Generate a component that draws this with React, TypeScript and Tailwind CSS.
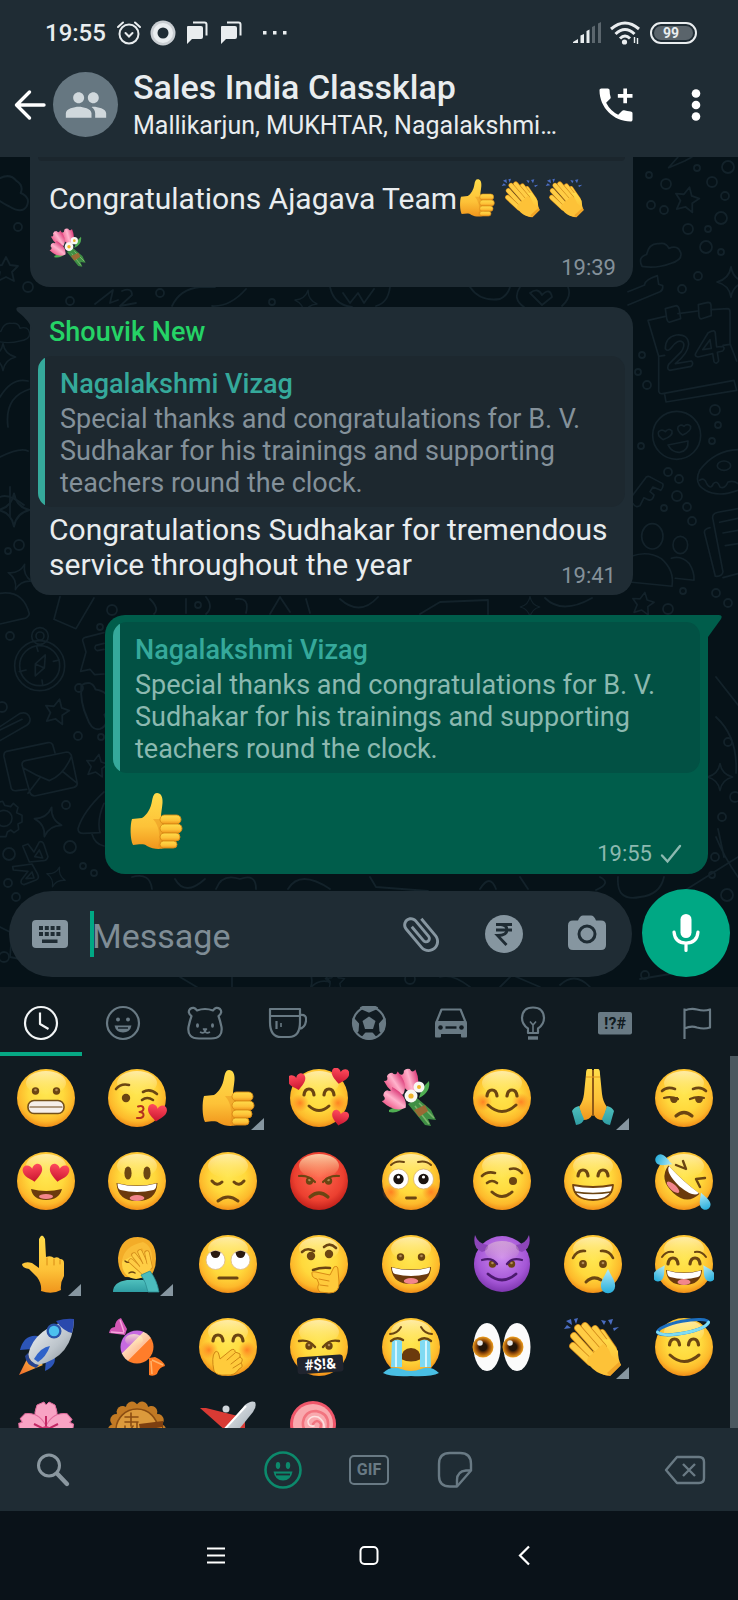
import React from "react";
import { MdAddIcCall, MdAttachFile, MdGroup } from "react-icons/md";

type Kids = { children?: React.ReactNode };

const BROWN = "#6b4512";

/* ---------- shared gradients for the emoji drawings ---------- */

function Gradients() {
  return (
    <svg className="absolute h-0 w-0" aria-hidden="true">
      <defs>
        <radialGradient id="gFace" cx=".5" cy=".42" r=".6">
          <stop offset="0" stopColor="#ffe650" />
          <stop offset=".5" stopColor="#ffd93c" />
          <stop offset=".8" stopColor="#fdb92b" />
          <stop offset="1" stopColor="#ee8514" />
        </radialGradient>
        <linearGradient id="gShine" x1="0" y1="0" x2="0" y2="1">
          <stop offset="0" stopColor="#fff7cc" stopOpacity=".75" />
          <stop offset="1" stopColor="#fff2a0" stopOpacity="0" />
        </linearGradient>
        <radialGradient id="gRed" cx=".5" cy=".42" r=".6">
          <stop offset="0" stopColor="#ff6a50" />
          <stop offset=".7" stopColor="#ec4030" />
          <stop offset="1" stopColor="#bd1c18" />
        </radialGradient>
        <radialGradient id="gPurple" cx=".5" cy=".38" r=".64">
          <stop offset="0" stopColor="#cf8cf0" />
          <stop offset=".7" stopColor="#a456d6" />
          <stop offset="1" stopColor="#7a33ab" />
        </radialGradient>
        <radialGradient id="gCheek">
          <stop offset="0" stopColor="#ff6a1c" stopOpacity=".75" />
          <stop offset="1" stopColor="#ff7a1c" stopOpacity="0" />
        </radialGradient>
        <linearGradient id="gHand" x1="0" y1="0" x2="0" y2="1">
          <stop offset="0" stopColor="#ffdc4a" />
          <stop offset=".6" stopColor="#fdc238" />
          <stop offset="1" stopColor="#f0951c" />
        </linearGradient>
        <linearGradient id="gHeart" x1="0" y1="0" x2="0" y2="1">
          <stop offset="0" stopColor="#ff4a5c" />
          <stop offset="1" stopColor="#c9152f" />
        </linearGradient>
        <linearGradient id="gTear" x1="0" y1="0" x2="0" y2="1">
          <stop offset="0" stopColor="#b6ecf9" />
          <stop offset="1" stopColor="#27aedb" />
        </linearGradient>
        <linearGradient id="gTulip" x1="0" y1="0" x2="1" y2="0">
          <stop offset="0" stopColor="#f0608f" />
          <stop offset=".5" stopColor="#ffb3cc" />
          <stop offset="1" stopColor="#dd3f7c" />
        </linearGradient>
        <linearGradient id="gSteel" x1="0" y1="0" x2="1" y2="1">
          <stop offset="0" stopColor="#f6f8fa" />
          <stop offset=".6" stopColor="#bcc4cb" />
          <stop offset="1" stopColor="#7d8790" />
        </linearGradient>
        <linearGradient id="gFlame" x1="1" y1="0" x2="0" y2="1">
          <stop offset="0" stopColor="#ffd24a" />
          <stop offset="1" stopColor="#f06a2a" />
        </linearGradient>
        <linearGradient id="gTeal" x1="0" y1="0" x2="0" y2="1">
          <stop offset="0" stopColor="#4fc0bd" />
          <stop offset="1" stopColor="#2f9da3" />
        </linearGradient>
        <radialGradient id="gIris">
          <stop offset=".35" stopColor="#241408" />
          <stop offset=".6" stopColor="#8a4408" />
          <stop offset="1" stopColor="#f0a01f" />
        </radialGradient>
        <linearGradient id="gCandy" x1="0" y1="0" x2="1" y2="1">
          <stop offset=".36" stopColor="#c66ae0" />
          <stop offset=".38" stopColor="#ffd9b8" />
          <stop offset=".56" stopColor="#ffc29a" />
          <stop offset=".58" stopColor="#ff7d2a" />
        </linearGradient>
      </defs>
    </svg>
  );
}

/* ---------- small parts ---------- */

function L({ d, w = 2.6, c = BROWN }: { d: string; w?: number; c?: string }) {
  return <path d={d} fill="none" stroke={c} strokeWidth={w} strokeLinecap="round" strokeLinejoin="round" />;
}

function Finger({ d, w = 7 }: { d: string; w?: number }) {
  return (
    <>
      <L d={d} w={w + 1.6} c="#d28a1a" />
      <L d={d} w={w} c="#ffcd45" />
    </>
  );
}

function Face({ children, fill = "url(#gFace)" }: Kids & { fill?: string }) {
  return (
    <>
      <circle r="29" fill={fill} />
      <ellipse cy="-15" rx="20" ry="12" fill="url(#gShine)" />
      {children}
    </>
  );
}

function Eyes({ x = 10.5, y = -7, r = 3.7, cx = 0 }: { x?: number; y?: number; r?: number; cx?: number }) {
  return (
    <>
      <circle cx={cx - x} cy={y} r={r} fill={BROWN} />
      <circle cx={cx + x} cy={y} r={r} fill={BROWN} />
      <circle cx={cx - x} cy={y - 1} r={r * 0.35} fill="#b08a55" />
      <circle cx={cx + x} cy={y - 1} r={r * 0.35} fill="#b08a55" />
    </>
  );
}

function HappyEyes({ y = -3, x = 10 }: { y?: number; x?: number }) {
  return (
    <g transform={`translate(0 ${y})`}>
      <L d={`M${-x - 5} 1C${-x - 4} -7 ${-x + 4} -7 ${-x + 5} 1`} w={3.2} />
      <L d={`M${x - 5} 1C${x - 4} -7 ${x + 4} -7 ${x + 5} 1`} w={3.2} />
    </g>
  );
}

function Heart({ x, y, s = 1, r = 0 }: { x: number; y: number; s?: number; r?: number }) {
  return (
    <path
      transform={`translate(${x} ${y}) rotate(${r}) scale(${s})`}
      d="M0 9C-4 5.5-10 2-10-3.5C-10-7.5-7-9-4.8-8.6C-2.400-8.200-.6-6.500 0-4.500C.6-6.500 2.400-8.200 4.800-8.600C7-9 10-7.500 10-3.500C10 2 4 5.500 0 9Z"
      fill="url(#gHeart)"
    />
  );
}

function Cheeks({ y = 5, x = 19 }: { y?: number; x?: number }) {
  return (
    <>
      <circle cx={-x} cy={y} r="9" fill="url(#gCheek)" />
      <circle cx={x} cy={y} r="9" fill="url(#gCheek)" />
    </>
  );
}

function Tear({ x, y, s = 1, r = 0 }: { x: number; y: number; s?: number; r?: number }) {
  return (
    <path
      transform={`translate(${x} ${y}) rotate(${r}) scale(${s})`}
      d="M0-12C3-5 7-1 7 5A7 7 0 0 1-7 5C-7-1-3-5 0-12Z"
      fill="url(#gTear)"
    />
  );
}

function BigMouth({ y = 3, w = 20, h = 17 }: { y?: number; w?: number; h?: number }) {
  return (
    <g transform={`translate(0 ${y})`}>
      <path d={`M${-w} 0Q0 5 ${w} 0Q${w - 1} ${h} 0 ${h}Q${-w + 1} ${h} ${-w} 0Z`} fill="#6b3a0d" />
      <path d={`M${-w + 1} .5Q0 5.500 ${w - 1} .5Q${w - 1} 6 ${w - 4} 7Q0 11 ${-w + 4} 7Q${-w + 1} 6 ${-w + 1} .5Z`} fill="#fff" />
      <ellipse cy={h - 3} rx={w * 0.36} ry="3" fill="#f2868c" />
    </g>
  );
}

const TULIP = "M-8-9Q-4-6-3-11Q0-13 3-11Q4-6 8-9Q10 7 0 12Q-10 7-8-9Z";

const FINGER = { fill: "url(#gHand)", stroke: "#d98a15", strokeWidth: 0.9 };

/* ---------- emoji drawings, centred on 0,0 in a 60 x 60 box ---------- */

const ART: Record<string, React.ReactNode> = {
  grimacing: (
    <Face>
      <Eyes />
      <rect x="-18" y="2.500" width="36" height="13" rx="6" fill="#f6efea" stroke="#74501a" strokeWidth="1.600" />
      <L d="M-16 9H16" w={1.2} />
    </Face>
  ),
  kiss: (
    <Face>
      <circle cx="-11" cy="0" r="4.200" fill={BROWN} />
      <L d="M-21-9Q-16-15-8-13" />
      <L d="M6-6Q13-10 20-4" />
      <L d="M5 2Q10-2 16 2" />
      <L d="M1 8.500Q6 7 6.500 10.500Q6.500 13.500 2.500 14Q7 14.500 6.500 17.500Q6 20.500 0 20" w={2} c="#b5321f" />
      <Heart x={20} y={15} s={0.95} r={8} />
    </Face>
  ),
  thumb: (
    <>
      <path
        d="M-24-2L-14-3C-9-6-5-13-4-20C-3-25-2-28 1-28C5-28 7-24 6.500-18C6-12 5-8 5-4L12 24C10 29-2 29-9 25C-13 22-18 24-23 24C-26 18-26 4-24-2Z"
        fill="url(#gHand)"
      />
      <path d="M-3-2Q6 8 2 26L8 27V-2Z" fill="#e58f1c" opacity=".45" />
      <rect x="4" y="-6" width="21" height="9" rx="4.500" {...FINGER} />
      <rect x="4" y="3" width="22" height="9" rx="4.500" {...FINGER} />
      <rect x="4" y="12" width="20" height="8" rx="4" {...FINGER} />
      <rect x="4" y="20" width="17" height="7" rx="3.500" {...FINGER} />
    </>
  ),
  hearts: (
    <Face>
      <Cheeks />
      <HappyEyes y={-4} />
      <L d="M-10 8Q0 17 10 8" w={3} />
      <Heart x={-22} y={-16} s={0.9} r={-12} />
      <Heart x={21} y={-22} s={0.88} r={10} />
      <Heart x={21} y={20} s={0.85} r={12} />
    </Face>
  ),
  bouquet: (
    <>
      <path d="M-3 6L14 27L20 28L17 21L25 22L20 12L6 0Z" fill="#3f8f45" />
      <path d="M4 8L18 26M8 5L23 20" stroke="#7cb46c" strokeWidth="1.500" />
      <path d="M-22 12Q-12 7-6 8Q-12 16-22 14ZM18-17Q20-6 8 0Q10-10 18-17Z" fill="#4fae52" />
      <path d="M3 12L14 7L17 13L8 19Z" fill="#9a6a35" />
      <path d={TULIP} transform="translate(-1 -17) rotate(-16) scale(1.050)" fill="url(#gTulip)" />
      <path d={TULIP} transform="translate(-15 -14) rotate(-34) scale(1.050)" fill="url(#gTulip)" />
      <path d={TULIP} transform="translate(-16 2) rotate(-54) scale(1.100)" fill="url(#gTulip)" />
      <circle cx="8" cy="-11" r="5.500" fill="#f8f8f4" />
      <circle cx="8" cy="-11" r="2" fill="#eeb52c" />
      <circle cx="0" cy="-2" r="6.500" fill="#f8f8f4" />
      <circle cx="0" cy="-2" r="2.600" fill="#eeb52c" />
    </>
  ),
  blush: (
    <Face>
      <Cheeks y={4} />
      <HappyEyes y={-3} />
      <L d="M-14 7Q0 20 14 7" w={3} />
    </Face>
  ),
  pray: (
    <>
      <path d="M-1-29H-5Q-7-29-7-24L-9-4Q-10 4-14 9L-10 22Q-3 22-1 17Z" fill="url(#gHand)" />
      <path d="M1-29H5Q7-29 7-24L9-4Q10 4 14 9L10 22Q3 22 1 17Z" fill="url(#gHand)" />
      <path d="M0-28V18" stroke="#b96f16" strokeWidth="1.500" />
      <path d="M-7-21H7" stroke="#e59a22" strokeWidth="1" />
      <path d="M-14 8Q-19 9-21 13L-17 27Q-10 26-9 21Q-12 15-14 8Z" fill="url(#gTeal)" />
      <path d="M14 8Q19 9 21 13L17 27Q10 26 9 21Q12 15 14 8Z" fill="url(#gTeal)" />
    </>
  ),
  unamused: (
    <Face>
      <L d="M-22-7Q-17-12-9-9M22-7Q17-12 9-9" />
      <L d="M-20 0Q-13-2-6 1M6 1Q13-2 20 0" w={2.2} />
      <path d="M-14-1H-6Q-6 5-10 5Q-14 5-14-1ZM11-1H19Q19 5 15 5Q11 5 11-1Z" fill={BROWN} />
      <L d="M-8 18Q0 11 8 18" w={3.2} />
    </Face>
  ),
  heartEyes: (
    <Face>
      <Heart x={-13} y={-8} s={0.98} r={-10} />
      <Heart x={13} y={-8} s={0.98} r={10} />
      <path d="M-15 8Q0 12 16 8Q13 19 0 19Q-13 19-15 8Z" fill="#6b3a0d" />
      <ellipse cy="15.500" rx="7" ry="2.600" fill="#f2868c" />
    </Face>
  ),
  smiley: (
    <Face>
      <ellipse cx="-9" cy="-8" rx="3.600" ry="6.600" fill={BROWN} />
      <ellipse cx="10" cy="-8" rx="3.600" ry="6.600" fill={BROWN} />
      <BigMouth y={2} w={20.5} h={18} />
    </Face>
  ),
  sad: (
    <Face>
      <L d="M-16 0Q-11 6-6 1M16 0Q11 6 6 1" w={3} />
      <L d="M-10 20Q0 12 10 20" w={3} />
    </Face>
  ),
  angry: (
    <Face fill="url(#gRed)">
      <Eyes x={9.5} y={0} />
      <L d="M-20-5Q-10-6-4 1M20-5Q10-6 4 1" w={2.2} />
      <L d="M-9 16Q0 8 9 16" w={3.2} />
    </Face>
  ),
  flushed: (
    <Face>
      <Cheeks y={11} x={20} />
      {[-12.5, 12.5].map((x) => (
        <g key={x}>
          <circle cx={x} cy="-2" r="10" fill="#fff" stroke="#d9b27a" strokeWidth=".8" />
          <circle cx={x} cy="-2" r="5.200" fill="#1b1411" />
          <circle cx={x} cy="-4" r="1.600" fill="#fff" />
        </g>
      ))}
      <L d="M-20-16Q-15-21-7-19M20-16Q15-21 7-19" w={2} />
      <L d="M-4.500 17H4.500" w={2.8} />
    </Face>
  ),
  wink: (
    <Face>
      <circle cx="11" cy="0" r="4" fill={BROWN} />
      <L d="M-20-5Q-15-10-7-8M8-12Q15-14 20-8" />
      <L d="M-15 2Q-10-2-5 2" />
      <L d="M-10 11Q0 20 10 11" w={3} />
    </Face>
  ),
  beam: (
    <Face>
      <HappyEyes y={-6} />
      <path d="M-20 4Q0 8 20 4Q19 19 0 19Q-19 19-20 4Z" fill="#fff" stroke="#74430f" strokeWidth="1.800" strokeLinejoin="round" />
      <L d="M-18 11Q0 14 18 11" w={1.5} />
    </Face>
  ),
  rofl: (
    <Face>
      <g transform="rotate(42)">
        <path d="M-22-1Q0 1 20-1Q19 16 0 16Q-20 16-22-1Z" fill="#6b3a0d" />
        <path d="M-21-1Q0 1 19-1Q19 6 0 7Q-20 6-21-1Z" fill="#fff" />
        <ellipse cx="-4" cy="12" rx="8" ry="3" fill="#f2868c" />
      </g>
      <L d="M-1-20L2-12L-8-16M21-3L12-2L16 6" w={2.4} />
      <Tear x={-20} y={-20} s={0.75} r={112} />
      <Tear x={20} y={20} s={0.75} r={-20} />
    </Face>
  ),
  pointUp: (
    <>
      <path
        d="M-7-1L-7-25Q-4-32-1-25L0-7Q5-9 8-6Q12-8 14-5Q18-5 18-1V12Q14 19 15 26Q6 31-5 27Q-4 20-9 13L-17 5Q-24 4-24 0Q-20-3-14-1L-7 4Z"
        fill="url(#gHand)"
      />
      <L d="M1-6V1M8-5V1M14-4V0" w={1} c="#d98a15" />
    </>
  ),
  facepalm: (
    <>
      <path d="M-24 28Q-24 18-10 16H6Q20 18 21 28Z" fill="url(#gTeal)" />
      <path d="M-12 13Q-19 6-19-6Q-17-27 1-27Q19-26 19-5Q19 7 12 14Z" fill="#f3ac28" />
      <ellipse cx="-1" cy="0" rx="14" ry="15" fill="#ffd445" />
      <path d="M-15-3Q-13-18 6-22Q16-18 15-2Q8-8 5-16Q-4-7-15-3Z" fill="#f9bd38" />
      <L d="M-12-3Q-10-1-7-2M-8 9Q-5 7-2 9" w={1.4} />
      <Finger d="M-6-3L5 7" w={3.8} />
      <Finger d="M-3-9L7 4" w={3.8} />
      <Finger d="M3-12L10 3" w={3.8} />
      <Finger d="M10-11L13 3" w={3.8} />
      <circle cx="8" cy="5" r="5.500" fill="#ffcd45" />
      <path d="M4 11L13 7Q20 16 22 28H11Q9 18 4 11Z" fill="#4bbcbd" stroke="#2b8d92" strokeWidth=".8" />
    </>
  ),
  rolling: (
    <Face>
      {[-12.5, 12.5].map((x) => (
        <g key={x}>
          <circle cx={x} cy="-4" r="9.500" fill="#fff" stroke="#dcb88a" strokeWidth=".8" />
          <path d={`M${x - 5}-11.500Q${x}-15 ${x + 5}-11.500Q${x + 4}-6 ${x}-6Q${x - 4}-6 ${x - 5}-11.500Z`} fill="#2a1a10" />
        </g>
      ))}
      <L d="M-9 14H9" w={3.2} />
    </Face>
  ),
  thinking: (
    <Face>
      <circle cx="-8" cy="-8" r="4.200" fill={BROWN} />
      <circle cx="10" cy="-10" r="4.200" fill={BROWN} />
      <L d="M-17-12Q-12-17-5-13M5-17Q11-22 17-16" />
      <L d="M-6 6Q2 3 11 4" />
      <path d="M-7 10Q-8 7-3 8L11 11L15 3Q19 1 19 6L20 18Q21 29 10 29L1 28Q-3 24 0 20L-2 15Q-7 14-7 10Z" fill="#ffca3b" stroke="#d98a15" strokeWidth="1" />
      <L d="M0 15L10 17M1 21L9 22" w={1} c="#d98a15" />
    </Face>
  ),
  grin: (
    <Face>
      <Eyes x={10.5} y={-7} />
      <BigMouth y={3} w={20} h={17} />
    </Face>
  ),
  devil: (
    <>
      <circle r="28" fill="url(#gPurple)" />
      <path d="M-27-29Q-30-16-20-12Q-13-14-14-19Q-24-20-27-29ZM27-29Q30-16 20-12Q13-14 14-19Q24-20 27-29Z" fill="#8d46ba" />
      <ellipse cy="-13" rx="17" ry="10" fill="url(#gShine)" opacity=".5" />
      <Eyes x={9.5} y={0} />
      <L d="M-20-4Q-10-7-5 0M20-4Q10-7 5 0" w={2.2} c="#4b1a6e" />
      <L d="M-14 10Q0 22 14 10" w={2.8} c="#4b1a6e" />
    </>
  ),
  cry: (
    <Face>
      <Eyes x={10} y={0} r={3.9} />
      <L d="M-20-6Q-16-14-8-13M20-6Q16-14 8-13" />
      <L d="M-7 18Q0 11 8 16" w={3} />
      <Tear x={15} y={17} s={1.02} />
    </Face>
  ),
  joy: (
    <Face>
      <L d="M-22-7Q-18-13-11-12M22-7Q18-13 11-12" w={2} />
      <HappyEyes y={-1} x={11} />
      <BigMouth y={6} w={18} h={15} />
      <Tear x={-24} y={9} s={0.75} r={32} />
      <Tear x={24} y={9} s={0.75} r={-32} />
    </Face>
  ),
  rocket: (
    <>
      <path d="M-16 6L-27 28L-3 18Z" fill="url(#gFlame)" />
      <path d="M-8-11Q-22-13-26 3L-14 2ZM8 7Q12 18-1 24L0 12Z" fill="#2c55b8" />
      <path d="M-18 8Q-12-20 28-28Q27 10-8 18Q-14 18-18 8Z" fill="url(#gSteel)" />
      <path d="M10-26Q20-29 28-28Q28-22 26-14Q17-16 10-26Z" fill="#2a49ad" />
      <path d="M-18 6Q-17 16-7 18L-10 21Q-20 18-21 9Z" fill="#27438f" />
      <path d="M-12 12Q-5 0 4-1Q0 10-8 15Z" fill="#2f62c9" />
      <circle cx="8" cy="-16" r="7.500" fill="#2a53a8" />
      <circle cx="8" cy="-16" r="5.200" fill="#4cc0ee" />
    </>
  ),
  candy: (
    <>
      <path d="M-12-12L-28-14Q-27-20-22-20Q-22-27-16-29L-10-18Z" fill="#d458b6" />
      <path d="M-26-15L-13-14M-17-27L-13-15" stroke="#f7a5dd" strokeWidth="1.500" />
      <path d="M12 11L18 10Q27 14 28 19Q22 20 20 27Q16 30 12 28Z" fill="#ff7a22" />
      <path d="M15 13L26 18M14 14L15 27" stroke="#ffb36a" strokeWidth="1.500" />
      <circle r="16.500" fill="url(#gCandy)" />
      <ellipse cx="-3" cy="-7" rx="9" ry="6" fill="url(#gShine)" />
    </>
  ),
  handOver: (
    <Face>
      <Cheeks y={3} />
      <HappyEyes y={-7} />
      <path
        d="M-14 24Q-17 10-13 5Q-10 3-9 8L-8 12L3 3Q7 1 7 5L10 6Q13 6 12 10Q16 12 13 16Q16 20 11 22Q7 29-2 28Q-11 29-14 24Z"
        fill="#ffcb3b"
        stroke="#cf8615"
        strokeWidth="1"
      />
      <L d="M7 6L-1 13M12 10L3 17M13 16L5 21" w={1} c="#cf8615" />
    </Face>
  ),
  swear: (
    <Face>
      <Eyes x={10} y={-1} />
      <L d="M-20-6Q-10-8-4 0M20-6Q10-8 4 0" w={2.4} />
      <g transform="rotate(-4)">
        <rect x="-23" y="9" width="46" height="17" rx="3" fill="#20242e" />
        <text y="22.500" textAnchor="middle" fontSize="15" fontWeight="700" fontFamily="Roboto, sans-serif" fill="#fff">
          #$!&amp;
        </text>
      </g>
    </Face>
  ),
  sob: (
    <Face>
      <L d="M-21-13Q-14-13-10-20M21-13Q14-13 10-20" w={2} />
      <path d="M-10 12Q-9 1 0 1Q9 1 10 12Q0 17-10 12Z" fill="#6b3a0d" />
      <path d="M-19-6Q-14-9-9-6V20H-20ZM19-6Q14-9 9-6V20H20Z" fill="#7fdaf2" />
      <path d="M-15-6V20M15-6V20" stroke="#d4f5fd" strokeWidth="2" />
      <path d="M-28 26Q-20 18-10 22Q0 26 10 22Q20 18 28 26Q20 30 0 29Q-20 30-28 26Z" fill="#49bfe4" />
      <L d="M-20-6Q-14-11-8-7M20-6Q14-11 8-7" w={2.4} />
    </Face>
  ),
  eyes: (
    <>
      {[-15, 15].map((x) => (
        <g key={x}>
          <ellipse cx={x} rx="13.500" ry="24" fill="#fbfbfb" />
          <circle cx={x - 4} cy="0" r="10.500" fill="url(#gIris)" />
          <circle cx={x - 7} cy="-4" r="2.800" fill="#e6e6e6" />
        </g>
      ))}
    </>
  ),
  clap: (
    <>
      <path d="M-27-26L-21-22L-22-28ZM-29-18L-22-19L-26-22ZM-17-23L-15-29L-19-28ZM18-22L20-28L15-27ZM20-19L26-20L21-16ZM11-22L8-27L13-26Z" fill="#4a6cc0" />
      <Finger d="M9-14L20 2" w={6} />
      <Finger d="M2-18L14-2" w={6} />
      <path d="M0-6L16-8L25 4Q25 12 28 18L17 29Q9 29 0 20Z" fill="url(#gHand)" />
      <Finger d="M-8-21L10 0" w={6} />
      <Finger d="M-15-19L6 5" w={6} />
      <Finger d="M-19-11L1 11" w={6} />
      <Finger d="M-20-1L-3 15" w={6} />
      <path d="M-2 8L10-3Q16 0 18 8L27 17L17 28Q8 29 0 22L-5 17Q-8 12-2 8Z" fill="#fdc238" />
      <path d="M14 26L26 15L28 18L17 29Z" fill="#f0a426" />
    </>
  ),
  halo: (
    <Face>
      <HappyEyes y={-3} x={9.5} />
      <L d="M-14 8Q0 21 15 8" w={3} />
      <g transform="rotate(-11 0 -20)">
        <ellipse cx="-1" cy="-20" rx="26" ry="6" fill="none" stroke="#1c6fc0" strokeWidth="3" />
        <path d="M-27-20Q-22-14-1-14Q20-14 25-20" fill="none" stroke="#7ddcf4" strokeWidth="3" strokeLinecap="round" />
      </g>
    </Face>
  ),
  blossom: (
    <>
      {[0, 72, 144, 216, 288].map((a) => (
        <path key={a} transform={`rotate(${a})`} d="M0 2Q-16-10-9-25L-2-28L0-25L3-28L9-25Q16-10 0 2Z" fill="#f9a3c4" stroke="#e26b9d" strokeWidth="1" />
      ))}
      <path d="M0-2V-14M-2-1L-12-6M2-1L12-6" stroke="#c22763" strokeWidth="2" />
      <circle r="4" fill="#d43a76" />
    </>
  ),
  mooncake: (
    <>
      {Array.from({ length: 14 }, (_, i) => (
        <circle key={i} r="6" cx="23" transform={`rotate(${(i * 360) / 14})`} fill="#c27a24" />
      ))}
      <circle r="25" fill="#c27a24" />
      <circle r="21" fill="#dc9a3c" stroke="#8a4d12" strokeWidth="1.500" />
      <L d="M-12-13H1M-6-17V-4M-12-8H1M-12-4V4M0-8V2M-4-4L-9 3" w={1.6} c="#8a4d12" />
      <path d="M2-6L26-9V14H6Z" fill="#7d3f10" />
      <path d="M8 0L25-3V14H8Z" fill="#d98020" />
    </>
  ),
  plane: (
    <>
      <path d="M-28-22L-22-22L10-14L17-8V4L-2 1Z" fill="#d93a34" />
      <circle cx="-2" cy="-21" r="3.500" fill="#cfd6db" />
      <path d="M-8 4L17-25Q23-30 27-28Q29-24 25-18L4 8Z" fill="url(#gSteel)" />
      <path d="M-6 2L18-24" stroke="#fff" strokeWidth="2" />
    </>
  ),
  lollipop: (
    <g transform="translate(-6 -6)">
      <circle r="23" fill="#f0566a" />
      <circle r="20" fill="#f9a9ae" />
      <L d="M0 0Q4-6 8 0Q8 9-1 9Q-11 8-10-2Q-8-13 3-13Q16-11 15 2Q13 16-2 16" w={2.6} c="#f2747f" />
      <L d="M1 2Q-5 3-5-3Q-2-9 5-7Q12-3 11 5" w={1.6} c="#fde1e0" />
    </g>
  ),
};

function Emoji({ name, size }: { name: string; size: string }) {
  return (
    <svg viewBox="-30 -30 60 60" className={size} aria-hidden="true">
      {ART[name]}
    </svg>
  );
}

/* ---------- chat wallpaper ---------- */

const star5 = "M0-12L4-4L12-3L6 3L8 12L0 8L-8 12L-6 3L-12-3L-4-4Z";
const star4 = "M0-15Q2-3 14 0Q2 3 0 15Q-2 3-14 0Q-2-3 0-15Z";
const cloud = "M-20 10Q-24 0-14-2Q-10-14 0-12Q8-13 10-6Q20-9 22 0Q23 8 10 10Q-5 14-20 10Z";

const SHAPES: [string, number, number, number, number][] = [
  [star5, 687, 42, 1, 12],
  [star4, 731, 125, 1, 0],
  [cloud, 660, 98, 0.95, -6],
  [star5, 643, 446, 0.9, 10],
  [star5, 57, 554, 1, 12],
  [star5, 97, 608, 0.9, 10],
  [star4, 48, 665, 1, 14],
  [star4, 56, 720, 0.7, 20],
  [cloud, 8, 34, 1.1, 40],
  [star5, 6, 112, 1, 0],
  [star4, 14, 353, 1.1, 0],
  [star4, 20, 420, 0.9, 20],
  [cloud, 12, 176, 0.8, 0],
  [star4, 3, 200, 0.9, 0],
  [cloud, 96, 548, 1.1, 80],
  [star4, 306, 145, 0.8, 10],
  [star4, 530, 450, 0.7, 0],
  [star4, 720, 620, 0.9, 0],
  [star4, 318, 818, 1, 30],
  [star5, 335, 824, 0.8, 0],
];

const DOTS: [number, number, number][] = [
  [728, 10, 6], [697, 11, 3], [712, 25, 5], [649, 18, 3], [666, 27, 5], [725, 39, 4], [651, 48, 4], [664, 53, 4],
  [721, 61, 6], [688, 72, 5], [708, 72, 3], [706, 90, 6], [721, 95, 3], [698, 119, 4], [682, 132, 4], [642, 198, 3],
  [638, 215, 3], [647, 228, 4], [715, 253, 5], [718, 268, 3], [712, 284, 3], [641, 289, 3], [668, 315, 4], [679, 322, 4],
  [677, 339, 5], [664, 351, 3], [687, 350, 4], [692, 364, 4], [683, 434, 3], [716, 436, 4], [728, 446, 4], [668, 452, 5],
  [10, 479, 4], [79, 531, 4], [78, 579, 4], [101, 580, 3], [2, 550, 5], [66, 648, 4], [70, 690, 6], [9, 697, 6],
  [83, 709, 3], [94, 716, 3], [8, 726, 4], [19, 388, 5], [8, 394, 3], [112, 453, 5], [28, 130, 5], [18, 70, 4],
  [70, 144, 4], [160, 136, 4], [272, 145, 3], [198, 448, 3], [735, 640, 5], [728, 585, 4], [715, 700, 4], [727, 738, 6],
  [709, 800, 5], [645, 818, 4], [16, 740, 4], [100, 470, 3], [722, 660, 4], [712, 718, 3], [4, 800, 5], [410, 822, 5],
];

function Wallpaper() {
  return (
    <svg className="absolute inset-0 h-full w-full" fill="none" stroke="#13222a" strokeWidth="1.800" strokeLinejoin="round" strokeLinecap="round" aria-hidden="true">
      {SHAPES.map(([d, x, y, s, r], i) => (
        <path key={i} d={d} transform={`translate(${x} ${y}) rotate(${r}) scale(${s})`} />
      ))}
      {DOTS.map(([x, y, r], i) => (
        <circle key={i} cx={x} cy={y} r={r} />
      ))}
      <g transform="translate(628 0) scale(.3333)" strokeWidth="5">
        <path d="M60 490L112 478M150 470L210 462M250 458L300 455Q306 456 306 465V560L326 612M60 490L92 598V700Q92 712 104 710L318 670M92 598L110 595M110 712L114 735L326 700L318 670M285 565L306 562" />
        <path d="M112 455L145 446Q152 448 154 458L158 485L124 496Q118 494 116 484ZM211 443L240 436Q248 436 249 444L250 476L219 486Q214 484 213 478Z" />
        <path d="M112 575Q112 540 145 534Q180 530 182 562Q180 590 142 620L190 612Q198 618 190 628L125 640Q115 636 122 622L160 584Q172 566 165 556Q150 544 130 572Q120 586 112 575ZM240 528Q262 514 262 530L266 570L285 568Q292 574 284 582L268 586L272 612Q266 624 258 614L254 590L210 600Q196 598 206 584ZM246 548L224 578L250 574Z" />
        <circle cx="146" cy="835" r="72" />
        <path d="M105 848Q86 835 92 824Q102 815 112 824Q122 812 132 822Q136 838 105 848ZM164 834Q146 822 150 810Q158 800 168 808Q178 798 188 808Q190 822 164 834ZM120 864L180 852Q182 880 156 886Q132 888 120 864Z" />
        <path d="M330 878Q260 880 215 940Q196 980 232 1000Q270 1022 330 1000M215 970Q230 960 236 980Q248 1000 256 980Q268 968 276 990Q290 998 300 975Q318 970 330 980" />
        <ellipse cx="288" cy="926" rx="20" ry="14" />
        <path d="M10 1020L55 960Q62 955 70 962L104 980Q108 990 98 1000L75 990L66 1004L78 1014Q74 1034 60 1028L48 1022L36 1046Q24 1054 15 1040M255 1088Q250 1070 270 1066L330 1055M255 1088L285 1245Q282 1260 262 1258L230 1130Q226 1116 246 1112M275 1096L330 1084M285 1128L330 1120M292 1166L330 1160M285 1262L330 1250" />
        <ellipse cx="73" cy="1138" rx="32" ry="38" />
        <ellipse cx="157" cy="1164" rx="22" ry="26" />
        <path d="M10 1198Q60 1180 100 1205Q140 1240 132 1288L12 1276M130 1204Q160 1194 184 1220Q200 1246 198 1270L142 1264" />
        <path d="M0 404L50 384Q48 370 88 356L92 382L104 386Q106 400 96 404L0 444M122 32L150 0M122 32L170 12L192 0" />
      </g>
      <g transform="translate(0 433) scale(.3333)" strokeWidth="5">
        <path d="M0 10Q70 0 88 72Q84 84 70 86L0 102M180 20L162 88L228 116L282 24M0 410L60 370Q86 364 90 386Q92 398 80 406L0 452M0 420L66 388" />
        <circle cx="120" cy="138" r="25" />
        <circle cx="120" cy="138" r="12" />
        <circle cx="119" cy="227" r="75" />
        <circle cx="119" cy="227" r="60" />
        <path d="M136 195L133 234L106 258V222ZM106 222L133 234M58 245L78 240M178 210L160 214M110 170L114 184M128 284L126 270" />
        <path d="M165 488L158 464Q154 456 144 458L20 484Q10 488 12 500L34 596Q38 604 50 602L80 598M76 512L200 486Q210 486 214 496L232 580Q232 590 222 592L104 618Q94 618 90 608L66 524Q66 514 76 512ZM70 534Q110 558 148 572Q190 556 214 500M84 610L122 560M232 580L190 546" />
        <circle cx="12" cy="685" r="24" />
        <path d="M0 636L8 634L14 646L32 650L40 640L54 652L50 668L66 676V696L54 702L56 718L42 728L32 720L22 726L18 740H0" />
        <path d="M68 768L84 762L102 786L118 756Q128 752 132 764L144 800Q140 812 130 812L88 816ZM104 800L118 780L128 804ZM38 830L96 822L112 850Q120 866 108 870L72 884Q60 882 64 870L84 844L40 840ZM78 866L96 846L102 864Z" />
        <path d="M312 606Q250 664 234 716Q234 730 250 730L300 728Q290 690 312 640M276 732Q284 762 312 768M312 128L256 142Q244 146 250 158L258 186L242 244L270 238L284 254L312 252M312 160L288 166Q280 176 292 182L312 178" />
      </g>
      <path d="M95 147L113 133L110 146L118 143M122 134Q132 130 132 138L120 149L136 146M172 149Q180 132 200 130L215 130M212 149Q230 150 246 132M330 130Q334 148 352 150M390 130Q388 146 376 149M343 136L350 146L358 136L364 146L374 132M470 130Q480 145 500 142Q508 138 510 130M520 130Q512 142 524 150M568 130Q572 140 562 149M530 136Q538 130 542 138Q550 130 552 140L542 148ZM150 442Q160 452 154 457M186 442V456M206 440Q214 450 206 457M236 442Q250 440 246 456M270 457L280 440L290 455M306 442L310 456M340 442Q360 460 378 440M420 457L440 445L488 443V457M545 441Q562 458 592 441" />
      <path d="M132 720Q150 715 152 732M175 722Q185 740 205 722M216 732Q222 716 240 722Q256 716 256 732M288 732Q300 712 330 732M370 720L376 730L428 734M480 732Q490 716 496 732M520 720L528 732M600 720Q612 726 596 733M618 720Q616 745 640 740Q660 738 664 720M684 734L738 700M724 700L718 672M716 520L738 548M716 560Q738 580 736 616M716 680Q724 700 738 720M180 820L200 832M232 820V830M440 820Q452 816 470 830M500 830L512 818L540 830M560 828Q575 814 590 830M640 822L700 812M0 770L12 776L10 800L20 802" />
      <path d="M0 240Q12 220 28 224M0 300Q20 290 28 294M8 270Q4 240 30 232M10 330V360M24 348Q8 336 0 340" />
    </svg>
  );
}

/* ---------- chat ---------- */

function Quote({ own }: { own?: boolean }) {
  return (
    <blockquote className={`mx-2 flex overflow-hidden rounded-[14px] ${own ? "bg-[#025144]" : "bg-[#1d282f]"}`}>
      <div className="w-[7px] shrink-0 bg-[#35a99b]" />
      <div className="pt-[9px] pb-2 pl-[15px]">
        <p className="text-[27px] leading-[38px] font-medium text-[#35a99b]">Nagalakshmi Vizag</p>
        <p className={`text-[27px] leading-[32px] ${own ? "text-[#8cb9b0]" : "text-[#84919a]"}`}>
          Special thanks and congratulations for B. V.
          <br />
          Sudhakar for his trainings and supporting
          <br />
          teachers round the clock.
        </p>
      </div>
    </blockquote>
  );
}

function Time({ children, own }: Kids & { own?: boolean }) {
  return <time className={`text-[22px] leading-6 ${own ? "text-[#8cb9b0]" : "text-[#84919a]"}`}>{children}</time>;
}

function Chat() {
  return (
    <main className="relative flex-1 overflow-hidden bg-[#061218]">
      <Wallpaper />
      <div className="relative flex flex-col">
        <article className="mr-[105px] ml-[30px] rounded-b-[20px] bg-[#1f2c34] pb-[7px] text-[#e9edef]">
          <div className="mx-2 h-1 rounded-b-[14px] bg-[#1b262d]" />
          <div className="mt-3 flex h-[50px] items-center pl-[19px]">
            <p className="text-[30px] whitespace-nowrap">Congratulations Ajagava Team</p>
            <span className="flex gap-1">
              <Emoji name="thumb" size="size-10" />
              <Emoji name="clap" size="size-10" />
              <Emoji name="clap" size="size-10" />
            </span>
          </div>
          <div className="flex h-[57px] items-end justify-between pr-[17px] pl-[19px]">
            <span className="self-start pt-[5px]">
              <Emoji name="bouquet" size="size-10" />
            </span>
            <Time>19:39</Time>
          </div>
        </article>

        <article className="relative mt-5 mr-[105px] ml-[30px] rounded-[20px] rounded-tl-none bg-[#1f2c34] pt-2 pb-[5px] text-[#e9edef]">
          <svg viewBox="0 0 16 22" className="absolute top-0 -left-[14px] h-[22px] w-4" aria-hidden="true">
            <path d="M3 0H16V22C13 14 7 9 1 4Q-1 0 3 0Z" fill="#1f2c34" />
          </svg>
          <h2 className="pb-[7px] pl-[19px] text-[27px] leading-[34px] font-medium text-[#25d366]">Shouvik New</h2>
          <Quote />
          <div className="mt-[5px] flex items-end justify-between pr-[17px] pl-[19px]">
            <p className="mb-2 text-[30px] leading-[35px] whitespace-nowrap">
              Congratulations Sudhakar for tremendous
              <br />
              service throughout the year
            </p>
            <span className="-ml-24">
              <Time>19:41</Time>
            </span>
          </div>
        </article>

        <article className="relative mt-5 mr-[30px] ml-[105px] rounded-[20px] rounded-tr-none bg-[#005d4b] pt-[7px] pb-2">
          <svg viewBox="0 0 16 22" className="absolute top-0 -right-[14px] h-[22px] w-4" aria-hidden="true">
            <path d="M13 0H0V22H2L15 4Q17 0 13 0Z" fill="#005d4b" />
          </svg>
          <Quote own />
          <div className="flex items-end justify-between pt-[18px] pr-[26px] pl-[21px]">
            <span className="pb-[15px]">
              <Emoji name="thumb" size="size-[60px]" />
            </span>
            <span className="flex items-center gap-2">
              <Time own>19:55</Time>
              <svg viewBox="0 0 22 22" className="size-[22px]" fill="none" stroke="#8cb9b0" strokeWidth="2.400" strokeLinecap="round" role="img" aria-label="Sent">
                <path d="M2 12.500L7.500 18.500L20 3" />
              </svg>
            </span>
          </div>
        </article>

        <form className="mt-[15px] flex items-end gap-[10px] pr-2 pb-2 pl-[9px]" onSubmit={(e) => e.preventDefault()}>
          <div className="flex h-[86px] min-w-0 flex-1 items-center rounded-full bg-[#1f2c34] pr-[25px] pl-[23px]">
            <button type="button" aria-label="Keyboard" className="shrink-0">
              <svg viewBox="0 0 36 28" className="h-7 w-9">
                <rect width="36" height="28" rx="4" fill="#8696a0" />
                <g fill="#1f2c34">
                  {[7, 12.8, 18.6, 24.4].map((x) => (
                    <g key={x}>
                      <rect x={x} y="6" width="4" height="4" />
                      <rect x={x} y="12" width="4" height="4" />
                    </g>
                  ))}
                  <rect x="10" y="19.500" width="15.500" height="3.500" />
                </g>
              </svg>
            </button>
            <span className="ml-[22px] h-[46px] w-1 shrink-0 bg-[#00a884]" />
            <input
              type="text"
              aria-label="Message"
              placeholder="Message"
              className="-ml-[2px] min-w-0 flex-1 bg-transparent pt-1 text-[34px] text-[#e9edef] outline-none placeholder:text-[#7f8d96]"
            />
            <div className="flex shrink-0 items-center gap-[43px] text-[#8696a0]">
              <button type="button" aria-label="Attach" className="flex size-10 items-center justify-center">
                <MdAttachFile className="size-[46px] shrink-0 -rotate-[40deg]" />
              </button>
              <button type="button" aria-label="Payment" className="size-10">
                <svg viewBox="0 0 40 40" className="size-10">
                  <circle cx="20" cy="20" r="19" fill="#8696a0" />
                  <path d="M12 10.500H28M12 16H28M12 10.500H17Q23 11 23 16Q23 21.500 13.500 21.500L22.500 31" fill="none" stroke="#1f2c34" strokeWidth="2.800" />
                </svg>
              </button>
              <button type="button" aria-label="Camera" className="size-10">
                <svg viewBox="0 0 40 40" className="size-10">
                  <path d="M6 6.500H11Q13 1.500 16 1.500H24Q27 1.500 29 6.500H34Q39 6.500 39 11.500V31Q39 36 34 36H6Q1 36 1 31V11.500Q1 6.500 6 6.500Z" fill="#8696a0" />
                  <circle cx="20" cy="20" r="8" fill="none" stroke="#1f2c34" strokeWidth="3" />
                </svg>
              </button>
            </div>
          </div>
          <button type="button" aria-label="Record voice message" className="flex size-[88px] shrink-0 items-center justify-center rounded-full bg-[#00a884]">
            <svg viewBox="0 0 30 40" className="h-10 w-[30px]" fill="none" stroke="#fff" strokeLinecap="round">
              <rect x="9.500" y="1" width="11" height="24" rx="5.500" fill="#fff" stroke="none" />
              <path d="M3 19Q4 30 15 30Q26 30 27 19M15 30V37.500" strokeWidth="3.200" />
            </svg>
          </button>
        </form>
      </div>
    </main>
  );
}

/* ---------- header ---------- */

function MessageBadge() {
  return (
    <svg viewBox="0 0 22 24" className="h-6 w-[22px]">
      <path d="M7 1.500H18.500Q20.500 1.500 20.500 3.500V14.500" fill="none" stroke="#e9edef" strokeWidth="2" />
      <path d="M2 5H15Q17 5 17 7V16Q17 18 15 18H6L1 23V6Q1 5 2 5Z" fill="#e9edef" />
    </svg>
  );
}

function StatusBar() {
  return (
    <div className="flex h-16 items-center justify-between pt-px pr-[41px] pl-[45px] text-[#e9edef]">
      <div className="flex items-center">
        <span className="text-[24px] font-medium">19:55</span>
        <svg viewBox="0 0 26 26" className="ml-[10px] size-[26px]" fill="none" stroke="#e9edef" strokeWidth="2" strokeLinecap="round">
          <circle cx="13" cy="14" r="9.500" />
          <path d="M2 7L7 2.500M24 7L19 2.500M9.500 13L13 16.500L16.500 13" />
        </svg>
        <svg viewBox="0 0 26 26" className="ml-2 size-[26px]">
          <circle cx="13" cy="13" r="12.500" fill="#c9ced2" />
          <circle cx="13" cy="13" r="10" fill="#e9edef" />
          <circle cx="13" cy="13" r="5.500" fill="#1f2c34" />
        </svg>
        <span className="ml-[10px] flex gap-3">
          <MessageBadge />
          <MessageBadge />
        </span>
        <svg viewBox="0 0 26 6" className="ml-5 h-[6px] w-[26px]" fill="#e9edef">
          <rect x="1" y="1" width="3.500" height="3.500" />
          <rect x="11" y="1" width="3.500" height="3.500" />
          <rect x="21" y="1" width="3.500" height="3.500" />
        </svg>
      </div>
      <div className="flex items-center">
        <svg viewBox="0 0 30 22" className="h-[22px] w-[30px]" fill="#e9edef">
          <path d="M1 20L6 17V21H1ZM8.500 13.500L12 12V21H8.500ZM14.500 9L17.500 7.500V21H14.500Z" />
          <path d="M20 5L23 3.500V21H20ZM26 1.500L29 0V21H26Z" fill="#5b666d" />
        </svg>
        <svg viewBox="0 0 30 24" className="ml-[8px] h-6 w-[30px]" fill="none" stroke="#e9edef" strokeWidth="3">
          <path d="M1 8Q15-4 29 8M5.500 13Q15 4 24.500 13M10 17.500Q15 12.500 20 17.500" />
          <circle cx="14.500" cy="21" r="2.600" fill="#e9edef" stroke="none" />
          <path d="M24.500 22V16M27.500 17V23" strokeWidth="1.400" />
        </svg>
        <span className="ml-[10px] flex h-[22px] w-[47px] items-center rounded-full border-2 border-[#e9edef] p-[2px]">
          <span className="flex h-full flex-1 items-center rounded-full bg-[#5a646b] pl-[9px] text-[14px] leading-none font-bold">99</span>
        </span>
      </div>
    </div>
  );
}

function Header() {
  return (
    <header className="bg-[#1f2c34]">
      <StatusBar />
      <div className="flex items-center pr-6 pb-3 pl-[11px] text-white">
        <button type="button" aria-label="Back" className="shrink-0">
          <svg viewBox="0 0 38 38" className="size-[38px]" fill="none" stroke="#fff" strokeWidth="3.400" strokeLinejoin="round" strokeLinecap="round">
            <path d="M18.500 6L5.500 19L18.500 32M6 19H33" />
          </svg>
        </button>
        <span className="ml-1 flex size-[65px] shrink-0 items-center justify-center rounded-full bg-[#667781]">
          <MdGroup className="size-[44px] text-[#d0d8dc]" />
        </span>
        <div className="ml-[15px] min-w-0 flex-1 pt-1 text-[#e9edef]">
          <h1 className="truncate text-[34px] leading-[38px] font-medium">Sales India Classklap</h1>
          <p className="truncate text-[25px] leading-[39px]">Mallikarjun, MUKHTAR, Nagalakshmi…</p>
        </div>
        <button type="button" aria-label="Group call" className="shrink-0">
          <MdAddIcCall className="size-[44px]" />
        </button>
        <button type="button" aria-label="More options" className="ml-10 flex w-9 shrink-0 justify-center">
          <svg viewBox="0 0 10 32" className="h-8 w-[10px]" fill="#fff">
            <circle cx="5" cy="4.500" r="4.300" />
            <circle cx="5" cy="16" r="4.300" />
            <circle cx="5" cy="27.500" r="4.300" />
          </svg>
        </button>
      </div>
    </header>
  );
}

/* ---------- emoji keyboard ---------- */

const TABS: [string, React.ReactNode][] = [
  ["Recent", <g stroke="#f2f5f6" key="r"><circle cx="20" cy="20" r="16" /><path d="M19 9.500V21L27.500 26" /></g>],
  ["Smileys", <g key="s"><circle cx="20" cy="20" r="16" /><circle cx="15" cy="16.500" r="2" fill="currentColor" stroke="none" /><circle cx="25" cy="16.500" r="2" fill="currentColor" stroke="none" /><path d="M11.500 22.500H28.500Q27 29.500 20 29.500Q13 29.500 11.500 22.500Z" fill="currentColor" stroke="none" /><path d="M15 25H25" stroke="#111b21" strokeWidth="1.400" /></g>],
  ["Animals", <g key="a"><path d="M6.500 13Q2 9.500 5 6Q9 3 12 7.500Q20 4.500 28 7.500Q31 3 35 6Q38 9.500 33.500 13Q35 17 36.500 24Q38 35.500 26 35.500H14Q2 35.500 3.500 24Q5 17 6.500 13Z" /><ellipse cx="12.500" cy="22.500" rx="1.500" ry="2.200" fill="currentColor" stroke="none" /><ellipse cx="27.500" cy="22.500" rx="1.500" ry="2.200" fill="currentColor" stroke="none" /><path d="M18.500 26H21.500L20 28ZM15 29Q18.500 31 20 28.500Q21.500 31 25 29" strokeWidth="1.600" /></g>],
  ["Food", <g key="f"><path d="M3 6H33V19Q33 34 22 34H14Q3 34 3 19ZM3 13H33M33 12Q40 11 39 18Q38 25 32 26M9.500 18V26" /><path d="M14 20V24" strokeWidth="1.600" /></g>],
  ["Activities", <g key="b"><circle cx="20" cy="20" r="16" /><path d="M20 13.500L26.500 18L24 26H16L13.500 18Z" fill="currentColor" stroke="none" /><path d="M12 5L20 8.500L28 5L26 4H14ZM4.500 16L9 21L8.500 28L5.500 26ZM35.500 16L31 21L31.500 28L34.500 26ZM14 34L17 30.500H23L26 34L20 36Z" fill="currentColor" /></g>],
  ["Travel", <g key="c"><path d="M10.500 6.500H29.500L34.500 19H5.500Z" /><path d="M6 19H34Q35 19 35 20V33.500H31V30H9V33.500H5V20Q5 19 6 19Z" fill="currentColor" stroke="currentColor" strokeWidth="2" /><circle cx="9.500" cy="24.500" r="2.300" fill="#111b21" stroke="none" /><circle cx="30.500" cy="24.500" r="2.300" fill="#111b21" stroke="none" /><path d="M14.500 24.500H25.500" stroke="#111b21" strokeWidth="2.400" /></g>],
  ["Objects", <g key="o"><path d="M15 30V25.500Q9 21.500 9 15Q9.500 4.500 20 4.500Q30.500 4.500 31 15Q31 21.500 25 25.500V30Z" /><path d="M20 29V22L17 18.500M20 22L23 18.500" strokeWidth="1.600" /><path d="M15 35H25" strokeWidth="3.400" /></g>],
  ["Symbols", <g key="y"><rect x="3" y="9" width="34" height="22.500" rx="2" fill="currentColor" stroke="none" /><text x="20" y="26" textAnchor="middle" fontSize="16" fontWeight="700" fontFamily="Roboto, sans-serif" fill="#111b21" stroke="none">!?#</text></g>],
  ["Flags", <g key="l"><path d="M7.500 5.500V36M7.500 7.500Q14 5 20 6.500Q27 8.500 33 6.500V24.500Q27 26.500 20 24.500Q14 22.500 7.500 25.500" /></g>],
];

const GRID = [
  "grimacing", "kiss", "thumb", "hearts", "bouquet", "blush", "pray", "unamused",
  "heartEyes", "smiley", "sad", "angry", "flushed", "wink", "beam", "rofl",
  "pointUp", "facepalm", "rolling", "thinking", "grin", "devil", "cry", "joy",
  "rocket", "candy", "handOver", "swear", "sob", "eyes", "clap", "halo",
  "blossom", "mooncake", "plane", "lollipop",
];

const HAS_TONES = ["thumb", "pray", "pointUp", "facepalm", "clap"];

function EmojiPanel() {
  return (
    <section className="bg-[#111b21]" aria-label="Emoji">
      <nav className="grid grid-cols-9 text-[#697a84]">
        {TABS.map(([label, art], i) => (
          <button
            key={label}
            type="button"
            aria-label={label}
            className={`flex h-[69px] items-center justify-center border-b-4 pt-[6px] ${i === 0 ? "border-[#06a884]" : "border-transparent"}`}
          >
            <svg viewBox="0 0 40 40" className="size-10" fill="none" stroke="currentColor" strokeWidth="2.200" strokeLinejoin="round">
              {art}
            </svg>
          </button>
        ))}
      </nav>
      <div className="flex h-[372px] overflow-hidden">
        <div className="grid flex-1 grid-cols-8 content-start">
          {GRID.map((name) => (
            <button key={name} type="button" aria-label={name} className="relative flex h-[83px] items-center justify-center">
              <Emoji name={name} size="size-[60px]" />
              {HAS_TONES.includes(name) && (
                <svg viewBox="0 0 13 12" className="absolute right-[10px] bottom-[9px] h-3 w-[13px]">
                  <path d="M13 0V12H0Z" fill="#8696a0" />
                </svg>
              )}
            </button>
          ))}
        </div>
        <div className="w-2 shrink-0 bg-[#4b585f]" />
      </div>
      <div className="grid h-[83px] grid-cols-[1fr_auto_1fr] items-center bg-[#1f2c34] px-8 text-[#697a84]">
        <button type="button" aria-label="Search" className="w-10">
          <svg viewBox="0 0 40 40" className="size-10" fill="none" stroke="#8a979f" strokeLinecap="round">
            <circle cx="17" cy="15.500" r="10.500" strokeWidth="3" />
            <path d="M25.500 24L35 34" strokeWidth="4.400" />
          </svg>
        </button>
        <div className="flex items-center gap-[46px]">
          <button type="button" aria-label="Emoji">
            <svg viewBox="0 0 40 40" className="size-10" fill="none" stroke="#0c8a6c" strokeWidth="2.600">
              <circle cx="20" cy="20" r="17.500" />
              <ellipse cx="15" cy="15.500" rx="2.200" ry="3.400" fill="#0c8a6c" stroke="none" />
              <ellipse cx="25" cy="15.500" rx="2.200" ry="3.400" fill="#0c8a6c" stroke="none" />
              <path d="M10.500 21.500H29.500Q28 30.500 20 30.500Q12 30.500 10.500 21.500Z" fill="#0c8a6c" stroke="none" />
              <path d="M13 24.500H27" stroke="#1f2c34" strokeWidth="1.800" />
            </svg>
          </button>
          <button type="button" className="flex h-[30px] w-10 items-center justify-center rounded-[5px] border-2 border-[#697a84] text-[16px] leading-none font-bold">
            GIF
          </button>
          <button type="button" aria-label="Stickers">
            <svg viewBox="0 0 40 40" className="size-10" fill="none" stroke="currentColor" strokeWidth="2.400" strokeLinejoin="round">
              <path d="M15 3H25Q36 3 36 14V20.500L22 36.500H15Q4 36.500 4 26V14Q4 3 15 3Z" />
              <path d="M36 20.500H31Q22 21.500 22 30V36" />
            </svg>
          </button>
        </div>
        <button type="button" aria-label="Delete" className="justify-self-end">
          <svg viewBox="0 0 42 32" className="h-8 w-[42px]" fill="none" stroke="currentColor" strokeWidth="2.400" strokeLinejoin="round">
            <path d="M13 3H35Q40 3 40 8V24Q40 29 35 29H13L2 16Z" />
            <path d="M19 10L31 22M31 10L19 22" />
          </svg>
        </button>
      </div>
    </section>
  );
}

function SystemNav() {
  return (
    <footer className="flex h-[89px] items-center justify-center gap-[122px] bg-[#0a1219]">
      <button type="button" aria-label="Recent apps">
        <svg viewBox="0 0 32 32" className="size-8" stroke="#fff" strokeWidth="2.200">
          <path d="M8 8.500H26M8 15.500H26M8 22.500H26" />
        </svg>
      </button>
      <button type="button" aria-label="Home">
        <svg viewBox="0 0 32 32" className="size-8" fill="none" stroke="#fff" strokeWidth="2">
          <rect x="7.500" y="7" width="17" height="17" rx="4" />
        </svg>
      </button>
      <button type="button" aria-label="Back">
        <svg viewBox="0 0 32 32" className="size-8" fill="none" stroke="#fff" strokeWidth="2.200">
          <path d="M22 6.500L13 15.500L22 24.500" />
        </svg>
      </button>
    </footer>
  );
}

export default function App() {
  return (
    <div className="flex min-h-screen flex-col bg-[#0a1219] font-[Roboto,sans-serif]">
      <Gradients />
      <Header />
      <Chat />
      <EmojiPanel />
      <SystemNav />
    </div>
  );
}
